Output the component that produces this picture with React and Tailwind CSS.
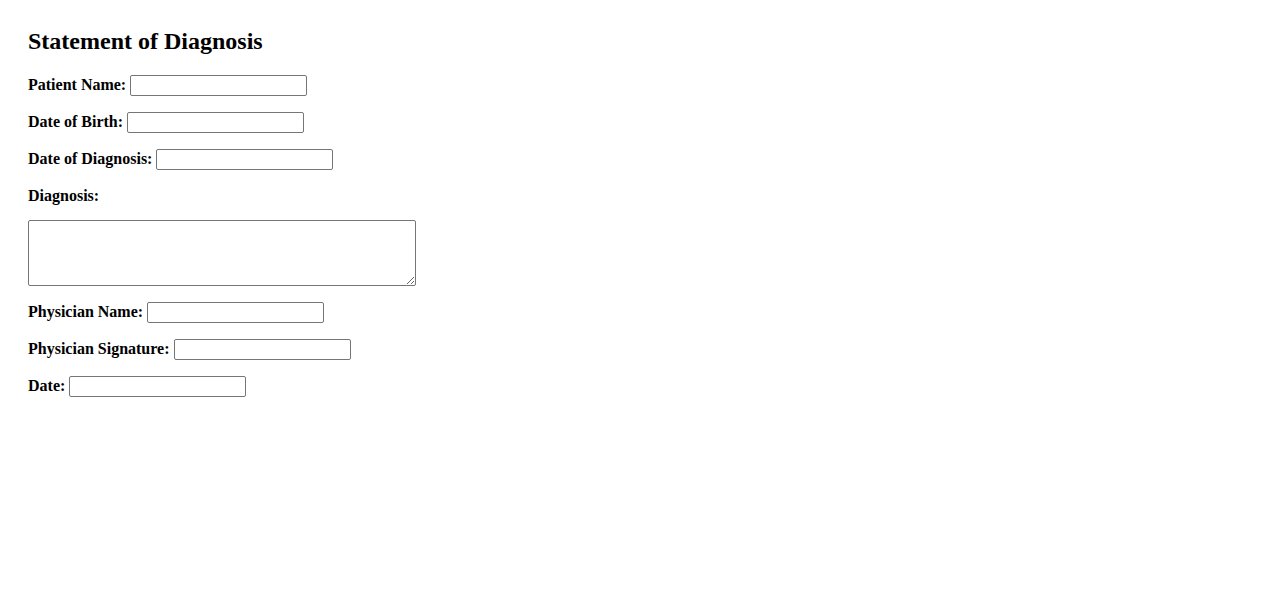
import React from 'react';

const Field = ({ label }) => (
    <div className="flex items-center gap-1 h-[21px]">
        <label className="font-bold text-[16px] leading-[18px] pb-[2px]">{label}</label>
        <input type="text" className="w-[177px] h-[21px] border border-[#767676] rounded-[2px] bg-white px-[2px] text-[13px]" />
    </div>
);

export default function App() {
    return (
        <div className="min-h-screen bg-white text-black pt-[27px] px-[28px]" style={{ fontFamily: '"Liberation Serif", "Times New Roman", serif' }}>
            <h2 className="text-[24px] font-bold leading-[28px] mb-[20px]">Statement of Diagnosis</h2>
            <div className="flex flex-col gap-4 items-start">
                <Field label="Patient Name:" />
                <Field label="Date of Birth:" />
                <Field label="Date of Diagnosis:" />
                <label className="font-bold text-[16px] leading-[16px] pt-[2px]">Diagnosis:</label>
                <textarea className="w-[388px] h-[66px] border border-[#767676] rounded-[2px] bg-white p-[2px]" />
                <Field label="Physician Name:" />
                <Field label="Physician Signature:" />
                <Field label="Date:" />
            </div>
        </div>
    );
}
